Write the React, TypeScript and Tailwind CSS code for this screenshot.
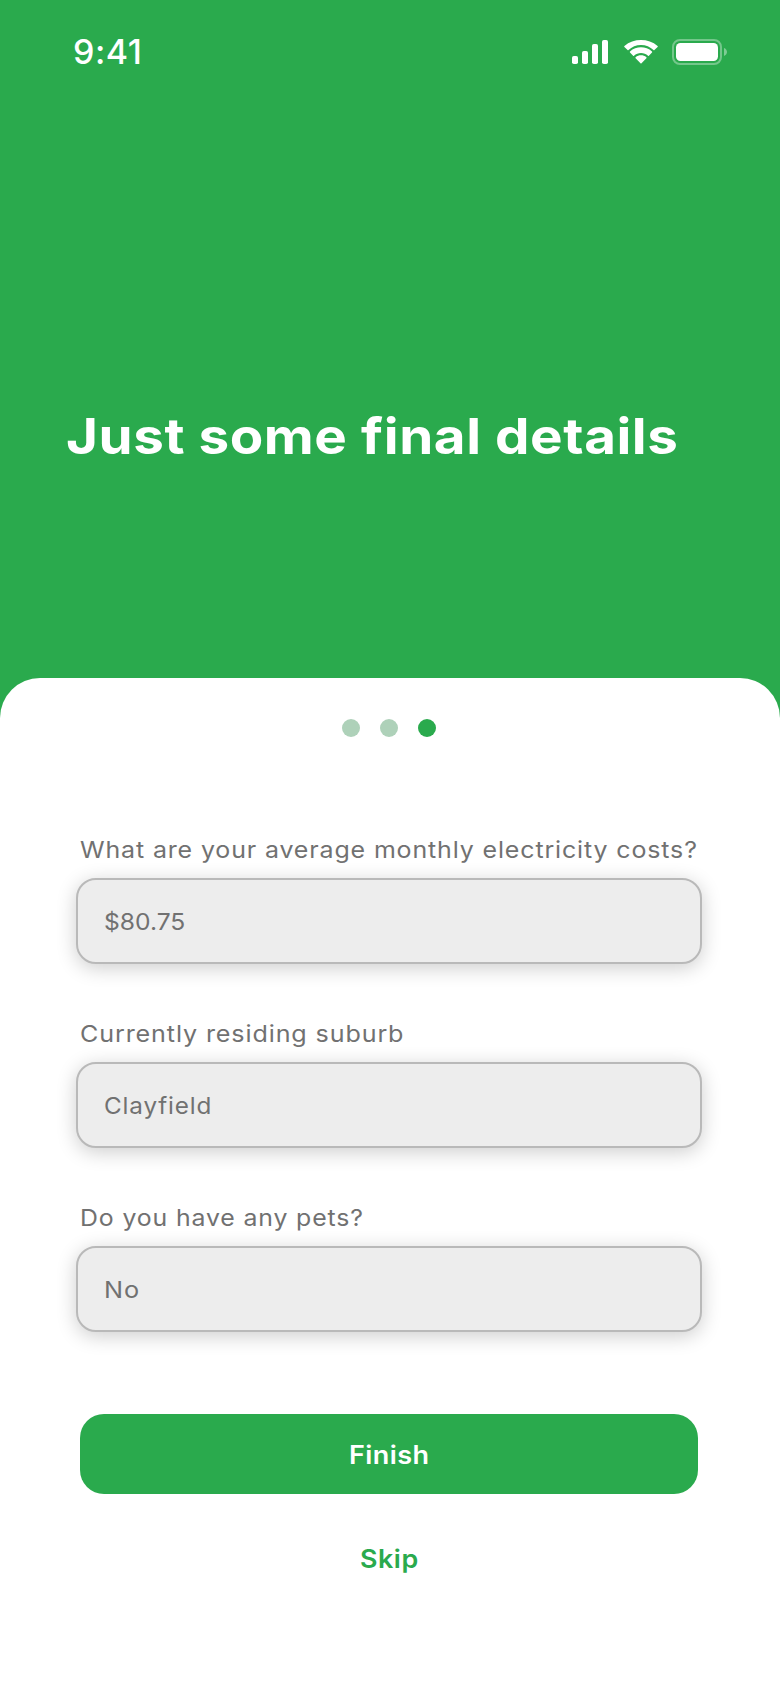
const fields = [
  { label: "What are your average monthly electricity costs?", value: "$80.75", labelClass: "scale-x-[1.085]", valueClass: "scale-x-[1.07]" },
  { label: "Currently residing suburb", value: "Clayfield", labelClass: "scale-x-[1.092]", valueClass: "scale-x-[1.055] tracking-[0.8px]" },
  { label: "Do you have any pets?", value: "No", labelClass: "scale-x-[1.08]", valueClass: "scale-x-[1.1] tracking-[0.8px]" },
];

function StatusBar() {
  return (
    <div className="flex h-[104px] items-center justify-between pr-[53px] pl-[73px] text-white">
      <span className="text-[34px] leading-[40px] font-medium tracking-[0.5px]">9:41</span>
      <div className="flex items-center">
        <svg width="36" height="24" viewBox="0 0 36 24" fill="currentColor">
          <rect x="0" y="16" width="6" height="8" rx="1.8" />
          <rect x="10" y="11" width="6" height="13" rx="1.8" />
          <rect x="20" y="4" width="6" height="20" rx="1.8" />
          <rect x="30" y="0" width="6" height="24" rx="1.8" />
        </svg>
        <svg className="ml-4" width="34" height="24" viewBox="0 0 34 24" fill="currentColor">
          <path d="M17 5C21.8 5 26.2 6.9 29.5 10.1C29.8 10.4 30.2 10.4 30.4 10.1L33.6 6.9C33.9 6.6 33.9 6.2 33.6 5.9C24.4-1.9 9.6-1.9.4 5.9C.1 6.2.1 6.6.4 6.9L3.6 10.1C3.8 10.4 4.2 10.4 4.5 10.1C7.8 6.9 12.2 5 17 5Z" />
          <path d="M17 13C19.6 13 22.1 14 24 15.7C24.3 16 24.7 16 24.9 15.7L28 12.5C28.3 12.2 28.3 11.8 28 11.5C21.8 5.9 12.2 5.9 6 11.5C5.7 11.8 5.7 12.2 6 12.5L9.1 15.7C9.3 16 9.7 16 10 15.7C11.9 14 14.4 13 17 13Z" />
          <path d="M22.4 18.2C22.7 17.9 22.7 17.5 22.4 17.2C19.3 14.6 14.7 14.6 11.6 17.2C11.3 17.5 11.3 17.9 11.6 18.2L16.5 23.2C16.8 23.5 17.2 23.5 17.5 23.2Z" />
        </svg>
        <svg className="ml-[14px]" width="55" height="26" viewBox="0 0 55 26">
          <rect x="1" y="1" width="48" height="24" rx="7" fill="none" stroke="white" strokeOpacity=".35" strokeWidth="2" />
          <rect x="4" y="4" width="42" height="18" rx="4.5" fill="white" />
          <path d="M52 9V17C53.7 16.4 55 14.8 55 13S53.7 9.6 52 9Z" fill="white" fillOpacity=".4" />
        </svg>
      </div>
    </div>
  );
}

export default function App() {
  return (
    <main className="flex h-[1688px] w-[780px] flex-col bg-[#2aaa4d] font-['Inter',sans-serif]">
      <StatusBar />
      <header className="flex h-[574px] items-start pt-[302px] pl-[66px]">
        <h1 className="origin-left scale-x-[1.095] text-[50px] leading-[60px] font-bold tracking-[0.5px] whitespace-nowrap text-white">Just some final details</h1>
      </header>
      <section className="flex flex-1 flex-col rounded-t-[40px] bg-white pt-[41px]">
        <div className="flex justify-center gap-5 pr-[2px]">
          <span className="size-[18px] rounded-full bg-[#aed1b9]" />
          <span className="size-[18px] rounded-full bg-[#aed1b9]" />
          <span className="size-[18px] rounded-full bg-[#2aaa4d]" />
        </div>
        <form className="mt-[98px] ml-[76px] flex w-[626px] flex-col">
          <div className="flex flex-col gap-[55px]">
            {fields.map((f) => (
              <label key={f.label} className="flex flex-col gap-[13px] text-[23px] leading-[30px] text-[#717171]">
                <span className={`ml-1 origin-left self-start whitespace-nowrap tracking-[0.8px] ${f.labelClass}`}>{f.label}</span>
                <span className="flex h-[86px] items-center rounded-[20px] border-2 border-[#b9b9b9] bg-[#ededed] pt-0.5 pl-[26px] shadow-[0_4px_20px_rgba(0,0,0,0.2)]">
                  <span className={`origin-left ${f.valueClass}`}>{f.value}</span>
                </span>
              </label>
            ))}
          </div>
          <button type="button" className="mx-1 mt-[82px] flex h-20 items-center justify-center rounded-[24px] bg-[#2aaa4d] pt-0.5 pl-px text-[25px] leading-[30px] font-semibold tracking-[0.4px] text-white">
            <span className="scale-x-[1.08]">Finish</span>
          </button>
          <button type="button" className="mt-[50px] scale-x-[1.075] self-center text-[25px] leading-[30px] font-semibold tracking-[0.5px] text-[#2aaa4d]">
            Skip
          </button>
        </form>
      </section>
    </main>
  );
}
